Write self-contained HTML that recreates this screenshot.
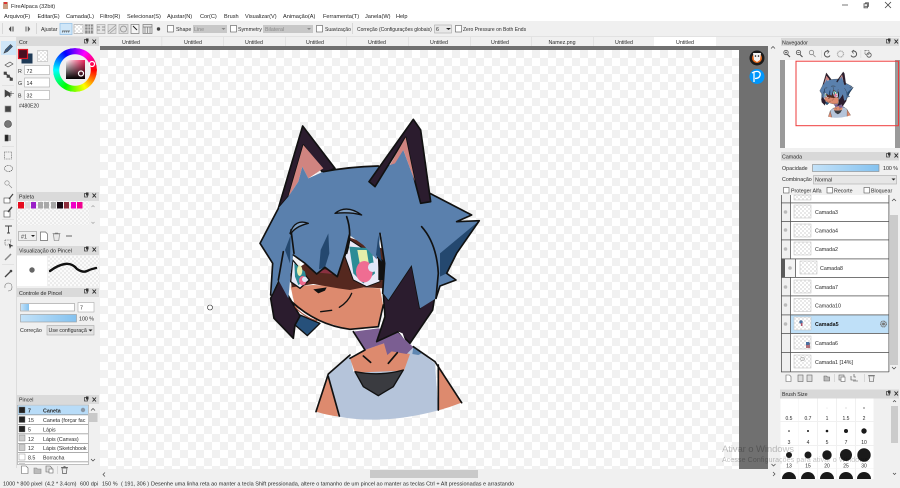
<!DOCTYPE html>
<html><head><meta charset="utf-8"><style>
html,body{margin:0;padding:0;background:#f0f0f0;width:900px;height:488px;overflow:hidden}
#w{position:absolute;left:0;top:0;width:900px;height:488px;filter:blur(.25px)}
svg{position:absolute;left:0;top:0;font-family:"Liberation Sans",sans-serif;font-size:5.3px;fill:#2a2a2a}
.wheel{position:absolute;left:53px;top:48px;width:44px;height:44px;border-radius:50%;background:conic-gradient(#8000ff,#ff00ff 30deg,#f00 90deg,#ff0 150deg,#0f0 210deg,#0ff 270deg,#00f 330deg,#8000ff 360deg);-webkit-mask:radial-gradient(circle,transparent 15.5px,#000 16px);mask:radial-gradient(circle,transparent 15.5px,#000 16px)}
</style></head><body><div id="w">
<svg width="900" height="488" viewBox="0 0 900 488" xmlns="http://www.w3.org/2000/svg">
<defs>
<pattern id="ck" x="100" y="50" width="16" height="16" patternUnits="userSpaceOnUse"><rect width="16" height="16" fill="#fff"/><rect width="8" height="8" fill="#f1f1f1"/><rect x="8" y="8" width="8" height="8" fill="#f1f1f1"/></pattern>
<pattern id="sm" width="4" height="4" patternUnits="userSpaceOnUse"><rect width="4" height="4" fill="#fff"/><rect width="2" height="2" fill="#e8e8e8"/><rect x="2" y="2" width="2" height="2" fill="#e8e8e8"/></pattern>
<linearGradient id="bl" x1="0" y1="0" x2="1" y2="0"><stop offset="0" stop-color="#c4e2f8"/><stop offset="1" stop-color="#84c2f0"/></linearGradient>
<linearGradient id="h1" x1="0" y1="0" x2="1" y2="0"><stop offset="0" stop-color="#fff"/><stop offset="1" stop-color="#f0245c"/></linearGradient>
<linearGradient id="v1" x1="0" y1="0" x2="0" y2="1"><stop offset="0" stop-color="#000" stop-opacity="0"/><stop offset="1" stop-color="#000"/></linearGradient>
<clipPath id="bs"><rect x="780" y="398" width="110" height="81"/></clipPath>
</defs>

<!-- window chrome -->
<rect width="900" height="21" fill="#fff"/>
<rect x="0" y="21" width="900" height="15" fill="#f0f0f0"/>
<rect x="0" y="36" width="900" height="1" fill="#e2e2e2"/>
<rect x="3" y="2" width="5" height="7" fill="#c9a184"/><rect x="4" y="2" width="3" height="2" fill="#d33"/>
<text x="11" y="8" font-size="5.600">FireAlpaca (32bit)</text>
<g fill="#222" font-size="5.600">
<text x="4" y="18">Arquivo(F)</text><text x="37.500" y="18">Editar(E)</text><text x="66" y="18">Camada(L)</text><text x="100" y="18">Filtro(R)</text><text x="127" y="18">Selecionar(S)</text><text x="167" y="18">Ajustar(N)</text><text x="200" y="18">Cor(C)</text><text x="224" y="18">Brush</text><text x="245" y="18">Visualizar(V)</text><text x="283" y="18">Animação(A)</text><text x="323" y="18">Ferramenta(T)</text><text x="365" y="18">Janela(W)</text><text x="396" y="18">Help</text>
</g>
<rect x="842" y="4.500" width="6" height="1" fill="#777"/>
<path d="M864.500 6h4v-3.500h-3v1M864 3.500h3.500v4h-3.500z" fill="none" stroke="#555" stroke-width=".8" transform="translate(0,.3)"/>
<path d="M885 2l6 6M891 2l-6 6" stroke="#444" stroke-width=".8"/>

<!-- toolbar -->
<rect x="2" y="23" width="1" height="11" fill="#d8d8d8"/><rect x="36" y="23" width="1" height="11" fill="#d8d8d8"/>
<path d="M11 26.500l-2 2.500 2 2.500zM12.500 26.500v5M13.500 26.500v5" fill="#444" stroke="#444" stroke-width=".5"/>
<path d="M28 26.500l2 2.500-2 2.500zM26.500 26.500v5M25.500 26.500v5" fill="#666" stroke="#666" stroke-width=".5"/>
<text x="41" y="31">Ajustar</text>
<rect x="60" y="23.500" width="12" height="11" fill="#cfe6f8" stroke="#8cbde6" stroke-width=".7"/>
<path d="M62 31h8M62 32h1M64 32h1M66 32h1M68 32h1" stroke="#555" stroke-width=".7"/>
<g fill="none" stroke="#aaa" stroke-width=".7">
<rect x="74" y="24.500" width="9" height="9" fill="url(#sm)"/><rect x="85" y="24.500" width="8" height="9" fill="#888"/><path d="M85 27h8M85 30h8M88 24.500v9M90.500 24.500v9" stroke="#eee"/>
<rect x="97" y="24.500" width="8" height="9" fill="#e4e4e4"/><path d="M97 27h3M102 27h3M97 30h3M102 30h3" stroke="#777"/>
<rect x="108" y="24.500" width="8" height="9" fill="#e0e0e0"/><path d="M108 32l8-7M110 33l6-5" stroke="#999"/>
<rect x="119" y="24.500" width="9" height="9" fill="#e0e0e0"/><circle cx="123.500" cy="29" r="3" stroke="#888"/>
<rect x="131" y="24.500" width="8" height="9" fill="#f4f4f4" stroke="#777"/><path d="M133 26l4 4" stroke="#222" stroke-width="1"/>
<rect x="143" y="24.500" width="9" height="9" fill="#e8e8e8" stroke="#777"/><path d="M143 27h9M145 27v6M147.500 27v6M150 27v6" stroke="#777"/>
</g>
<circle cx="158.500" cy="29" r="1.700" fill="#444"/>
<rect x="167.500" y="25.500" width="6" height="6.500" fill="#fff" stroke="#555" stroke-width=".6"/><text x="176" y="31">Shape</text>
<rect x="193" y="25" width="34" height="8" fill="#c8c8c8"/><text x="194" y="31" fill="#888">Line</text><path d="M221.500 28l2 2 2-2z" fill="#888"/>
<rect x="230.500" y="25.500" width="6" height="6.500" fill="#fff" stroke="#555" stroke-width=".6"/><text x="238" y="31">Symmetry</text>
<rect x="263" y="25" width="50" height="8" fill="#c8c8c8"/><text x="265" y="31" fill="#888">Bilateral</text><path d="M307 28l2 2 2-2z" fill="#888"/>
<rect x="316.500" y="25.500" width="6" height="6.500" fill="#fff" stroke="#555" stroke-width=".6"/><text x="325" y="31" font-size="5">Suavização</text>
<rect x="352" y="23" width="1" height="11" fill="#d8d8d8"/>
<text x="357" y="31" font-size="5">Correção (Configurações globais)</text>
<rect x="434.500" y="25" width="17" height="8" fill="#e8e8e8" stroke="#aaa" stroke-width=".6"/><text x="436" y="31">6</text><path d="M446 28l2.500 2 2.500-2z" fill="#222"/>
<rect x="455.500" y="25.500" width="6" height="6.500" fill="#fff" stroke="#555" stroke-width=".6"/><text x="463" y="31" font-size="5">Zero Pressure on Both Ends</text>

<!-- tabs -->
<rect x="100" y="37" width="668" height="9" fill="#f0f0f0"/>
<rect x="654" y="37" width="62" height="9" fill="#fff"/>
<g text-anchor="middle">
<text x="131" y="44">Untitled</text><text x="193" y="44">Untitled</text><text x="254" y="44">Untitled</text><text x="315" y="44">Untitled</text><text x="377" y="44">Untitled</text><text x="439" y="44">Untitled</text><text x="500" y="44">Untitled</text><text x="562" y="44">Namez.png</text><text x="624" y="44">Untitled</text><text x="685" y="44">Untitled</text>
</g>
<g fill="#dcdcdc"><rect x="161.500" y="37" width=".7" height="9"/><rect x="223" y="37" width=".7" height="9"/><rect x="285" y="37" width=".7" height="9"/><rect x="346" y="37" width=".7" height="9"/><rect x="408" y="37" width=".7" height="9"/><rect x="470" y="37" width=".7" height="9"/><rect x="531" y="37" width=".7" height="9"/><rect x="593" y="37" width=".7" height="9"/></g>

<!-- canvas -->
<rect x="100" y="46" width="668" height="423" fill="#707070"/>
<rect x="100" y="50" width="639" height="419" fill="url(#ck)"/>
<rect x="100" y="469" width="680" height="11" fill="#f0f0f0"/>
<rect x="370" y="470" width="108" height="8" fill="#c9c9c9"/>
<path d="M771 48.500l2-2 2 2" fill="none" stroke="#444" stroke-width=".7"/>
<path d="M771.500 464l2 2 2-2M773 472l2 2-2 2" fill="none" stroke="#444" stroke-width=".7"/>
<path d="M105 472.500l-2 2 2 2" fill="none" stroke="#444" stroke-width=".7"/>

<!-- avatars -->
<circle cx="757" cy="58" r="7.500" fill="#1a1a1a"/><circle cx="757" cy="58" r="5" fill="#e8681a"/><path d="M753 53h8l-1 7-3 2-3-2z" fill="#f4f4f4"/><circle cx="755.500" cy="56" r=".8" fill="#111"/><circle cx="758.500" cy="56" r=".8" fill="#111"/>
<circle cx="757" cy="76.500" r="7.500" fill="#0096fa"/><path d="M754 82v-9.500M752 73q3-2 6-1.500 3 1 2 4-1 3-5 3" fill="none" stroke="#fff" stroke-width="1.300"/>

<!-- character -->
<g id="ch" transform="translate(250,230) scale(.3333)" stroke-linejoin="round" stroke-linecap="round">
<!-- body -->
<path d="M235,440 L198,545 Q232,556 268,560 L262,500 Z" fill="#dd8a6e"/>
<path d="M565,405 L635,518 Q600,532 565,541 Z" fill="#dd8a6e"/>
<path d="M300,375 L235,432 L265,560 Q400,585 565,541 L555,400 L490,350 L440,375 L460,420 L310,425 Z" fill="#b5c4da"/>
<path d="M490,352 L520,368 L505,375 L487,372 Z" fill="#5f87b2"/>
<path d="M300,385 L345,360 L400,340 L440,365 L480,372 L462,422 L315,428 Z" fill="#dd8a6e"/>
<path d="M310,305 L385,295 L445,305 L490,352 L470,372 L425,364 L412,375 L402,340 L345,360 Z" fill="#7b5e92"/>
<path d="M315,425 Q390,440 460,420 L430,470 L385,497 L340,470 Z" fill="#3a3b40" stroke="#111" stroke-width="4"/>
<g fill="none" stroke="#111" stroke-width="5">
<path d="M198,545 L235,432 L300,375"/><path d="M235,440 L268,558"/><path d="M555,395 L635,518"/><path d="M565,405 L565,540"/><path d="M490,350 L555,395"/>
<path d="M310,305 L345,360 L300,385"/><path d="M340,378 L362,397"/><path d="M442,368 L415,400"/>
</g>
<!-- back hair -->
<path d="M400,190 L415,210 L485,105 L510,235 L558,175 L548,240 L480,340 L445,305 L380,335 L405,260 Z" fill="#2b1c2e" stroke="#111" stroke-width="5"/>
<path d="M445,305 L465,330 L458,310 Z" fill="#fff"/>
<path d="M150,255 L210,280 L172,317 L135,285 Z" fill="#26507a" stroke="#111" stroke-width="4"/>
<path d="M62,205 L88,150 L125,215 L150,258 L135,285 L130,325 L72,265 Z" fill="#2b1c2e" stroke="#111" stroke-width="5"/>
<!-- face -->
<path d="M122,170 L190,165 L390,175 L400,230 L385,290 L300,298 L200,270 L135,230 Z" fill="#dd8a6e"/>
<path d="M120,130 L290,20 L410,60 L405,175 L340,172 L300,180 L265,175 L190,162 L125,172 Z" fill="#55281f"/>
<path d="M205,128 Q225,108 250,132 Z" fill="#8a3040"/>
<path d="M128,90 L178,150 L150,175 L122,155 Z" fill="#e8e8f6" stroke="#111" stroke-width="4"/>
<path d="M133,100 L165,125 L170,150 L145,165 L135,140 Z" fill="#2d8c96"/>
<ellipse cx="149" cy="122" rx="8" ry="16" fill="#e8eeb0"/>
<ellipse cx="158" cy="152" rx="11" ry="14" fill="#ee6a8e"/>
<circle cx="164" cy="148" r="8" fill="#dfe6f6"/>
<path d="M285,80 L300,30 L385,85 L390,155 L350,170 L310,150 Z" fill="#e9e9f7" stroke="#111" stroke-width="3"/>
<path d="M298,50 L365,55 L375,130 L340,160 L310,130 Z" fill="#2d8c96"/>
<path d="M322,60 L350,60 L358,110 L330,105 Z" fill="#e4eeaa"/>
<ellipse cx="343" cy="125" rx="25" ry="32" fill="#ef6d92"/>
<circle cx="368" cy="112" r="14" fill="#dfe8fa"/>
<path d="M385,80 L405,95 L405,150 L385,150 Z" fill="#111"/>
<path d="M190,178 L230,172 L225,182 L205,190 Z" fill="#111"/>
<path d="M212,245 L245,241 M268,232 Q295,215 305,190" fill="none" stroke="#111" stroke-width="4"/>
<path d="M125,215 Q200,285 300,298 L385,290 L400,225" fill="none" stroke="#111" stroke-width="5"/>
<path d="M135,230 Q160,260 200,272" fill="none" stroke="#a9503a" stroke-width="3"/>
<!-- left ear -->
<path d="M85,-65 L158,-312 L255,-185 L220,-170 L160,-255 L115,-100 Z" fill="#2b1c2e" stroke="#111" stroke-width="5"/>
<path d="M115,-100 L160,-255 L220,-185 L175,-155 L157,-190 L145,-145 Z" fill="#d08480"/>
<!-- hair -->
<path d="M85,-65 L115,-100 L145,-145 L157,-190 L175,-155 L220,-175 Q300,-190 380,-192 L420,-195 L460,-240 L495,-145 L510,-80 L540,-110 L665,-45 L620,-25 L688,-28 L620,70 L590,130 L618,150 L570,168 L558,205 L510,235 L485,105 L415,210 L400,190 L403,100 L393,10 L380,88 L340,45 L298,15 L285,70 L262,140 L225,112 L200,132 L165,100 L130,75 L122,130 L115,205 L85,150 L65,195 L68,100 L30,40 Z" fill="#5a80ad"/>
<path d="M688,-28 L570,70 L570,140 L590,130 L620,70 Z" fill="#24486f"/>
<path d="M235,10 L212,60 L207,118 L225,112 L238,70 Z" fill="#24486f"/>
<path d="M385,15 L378,75 L395,95 Z" fill="#24486f"/>
<path d="M122,15 L105,60 L120,100 Z" fill="#24486f"/>
<g fill="none" stroke="#111" stroke-width="5">
<path d="M220,-175 Q300,-190 385,-192"/>
<path d="M85,-65 L30,40 L68,100 L62,195"/>
<path d="M540,-110 L665,-45 L620,-25 L688,-28 L620,70 L590,130 L618,150 L570,168 L558,205"/>
<path d="M298,15 L285,70 L262,140 L225,112 L200,132 L165,100 L130,75"/>
<path d="M123,0 L132,70 M100,65 L85,150"/>
<path d="M515,-10 Q560,40 565,130 L558,205"/>
<path d="M290,-40 Q308,10 290,70"/>
<path d="M390,10 L404,100 L398,190"/>
</g>
<path d="M255,-50 Q290,-78 335,-45 Q300,-55 255,-50 Z" fill="#7e9fc4" stroke="#111" stroke-width="4"/>
<path d="M120,10 Q135,-35 175,-20 Q135,-10 122,12 Z" fill="#7e9fc4" stroke="#111" stroke-width="4"/>
<!-- right ear, over the hair -->
<path d="M357,-145 L490,-332 L512,-300 L542,-85 L512,-80 L495,-145 L467,-278 L375,-130 Z" fill="#2b1c2e" stroke="#111" stroke-width="5"/>
<path d="M420,-195 L467,-278 L495,-145 L460,-240 L435,-200 Z" fill="#d08480"/>
</g>
<circle cx="210" cy="307.500" r="2.500" fill="#fff" fill-opacity=".4" stroke="#222" stroke-width=".6"/>

<!-- left tools -->
<rect x="0" y="37" width="16" height="432" fill="#f0f0f0"/>
<rect x="16" y="37" width="1" height="431" fill="#dcdcdc"/>
<rect x="1" y="41" width="15" height="14" fill="#cfe6f8"/>
<g fill="#444" stroke="#444" stroke-width=".6">
<path d="M4 53l1.500-3.500 5-5 2 2-5 5z" fill="#3c5d80"/>
<path d="M5 65l5-3 3 2-5 3z" fill="#eee"/>
<path d="M5 73l7 6" stroke-width="1.200"/><rect x="4" y="72" width="2.500" height="2.500"/><rect x="7" y="75" width="2.500" height="2.500"/><rect x="10" y="78" width="2.500" height="2.500"/>
<path d="M5 90v7l3-2 2 2v-4z"/><path d="M11 91v5M9 93.500h5"/>
<rect x="5" y="106" width="6" height="6" stroke="#999"/>
<circle cx="8" cy="124" r="3.500" fill="#777"/>
<path d="M5 135h6v6h-6z" fill="#aaa" stroke="none"/><rect x="5" y="135" width="3" height="6" fill="#222"/>
<rect x="4.500" y="152" width="7" height="7" fill="none" stroke-dasharray="1 .7"/>
<ellipse cx="8.500" cy="168.500" rx="4" ry="3" fill="none" stroke-dasharray="1.200 .6"/>
<circle cx="7" cy="183" r="2.200" fill="none" stroke="#888"/><path d="M9 185l3 3" stroke="#888"/>
<rect x="4" y="198" width="6" height="5" fill="#fff"/><path d="M9 199l4-5" stroke-width="1.200"/>
<rect x="4" y="211" width="6" height="6" fill="#fff"/><path d="M8 212l4-5" stroke-width="1.500"/>
<path d="M5 226h7M8.500 226v7M7 233h3" stroke-width=".9"/>
<path d="M5 240h6l-1 5M5 240v5h3" fill="none" stroke-dasharray="1 .7"/><path d="M9 244l1 4 1-2 2 0z"/>
<path d="M5 260l6-6" stroke-width="1.500" stroke="#888"/>
<path d="M5 277l6-6" stroke-width="1.300"/><circle cx="11" cy="271" r="1"/>
<path d="M5 288q-1-4 3-5 4 0 4 4 0 4-4 4" fill="none" stroke="#777"/>
</g>
<g fill="#dcdcdc"><rect x="2" y="85" width="12" height=".7"/><rect x="2" y="146" width="12" height=".7"/><rect x="2" y="219" width="12" height=".7"/><rect x="2" y="264" width="12" height=".7"/></g>

<!-- panel Cor -->
<rect x="17" y="37" width="82" height="9" fill="#dadada"/>
<text x="19" y="44">Cor</text>
<g id="pb"><rect x="84.500" y="39.500" width="3" height="3.500" fill="none" stroke="#333" stroke-width=".7"/><rect x="86" y="38.500" width="2.500" height="3" fill="#333"/><path d="M92.500 39.500l3.500 4M96 39.500l-3.500 4" stroke="#222" stroke-width=".9"/></g>
<rect x="21.500" y="53.500" width="11" height="10" fill="#1e3a56"/>
<rect x="18.500" y="49.500" width="9" height="9" fill="#480E20" stroke="#e01828" stroke-width="1.200"/>
<rect x="37.500" y="50.500" width="10" height="11" fill="url(#sm)" stroke="#bbb" stroke-width=".6"/>
<rect x="24.500" y="65.500" width="25" height="9" fill="#fff" stroke="#aaa" stroke-width=".6"/>
<rect x="24.500" y="78" width="25" height="9" fill="#fff" stroke="#aaa" stroke-width=".6"/>
<rect x="24.500" y="90.500" width="25" height="9" fill="#fff" stroke="#aaa" stroke-width=".6"/>
<text x="18" y="73">R</text><text x="26.500" y="73">72</text><text x="18" y="85">G</text><text x="26.500" y="85">14</text><text x="18" y="97.500">B</text><text x="26.500" y="97.500">32</text>
<text x="19" y="107.500" font-size="5">#480E20</text>

<!-- panel Paleta -->
<rect x="17" y="192" width="82" height="9" fill="#dadada"/><text x="19" y="198.500">Paleta</text>
<use href="#pb" y="154"/>
<rect x="17" y="201" width="72" height="24" fill="url(#sm)" opacity=".6"/>
<g><rect x="18" y="202" width="6" height="6.500" fill="#e60c1e"/><rect x="25" y="202" width="5" height="6.500" fill="#dcdcdc"/><rect x="31" y="202" width="5" height="6.500" fill="#9a20c8"/><rect x="38" y="202" width="5" height="6.500" fill="#a8a8a8"/><rect x="44" y="202" width="5" height="6.500" fill="#a8a8a8"/><rect x="51" y="202" width="5" height="6.500" fill="#a8a8a8"/><rect x="57" y="202" width="6" height="6.500" fill="#180a14"/><rect x="64" y="202" width="5" height="6.500" fill="#8c2a3a"/><rect x="71" y="202" width="5" height="6.500" fill="#f000c8"/><rect x="77" y="202" width="5.500" height="6.500" fill="#f00090"/></g>
<path d="M91.500 207l1.500-1.500 1.500 1.500M91.500 222l1.500 1.500 1.500-1.500" fill="none" stroke="#999" stroke-width=".6"/>
<rect x="18.500" y="231.500" width="18" height="9" fill="#eee" stroke="#999" stroke-width=".6"/><text x="21" y="238.500">#1</text><path d="M31 235l2 2 2-2z" fill="#222"/>
<path d="M40.500 232h5l2 2v6.500h-7z" fill="#fff" stroke="#666" stroke-width=".7"/>
<path d="M53.500 234h6l-.7 6.500h-4.600zM52.500 233.500h8M55 233h3" fill="#e8e8e8" stroke="#777" stroke-width=".6"/>
<rect x="66" y="235.500" width="6" height="1" fill="#666"/>

<!-- brush preview -->
<rect x="17" y="246" width="82" height="9" fill="#dadada"/><text x="19" y="252.500">Visualização do Pincel</text>
<use href="#pb" y="208"/>
<rect x="48" y="256" width="51" height="30" fill="url(#sm)" opacity=".7"/>
<rect x="17" y="256" width="30" height="30" fill="#fff"/>
<circle cx="32" cy="270" r="2.700" fill="#666"/>
<path d="M50 271q8-6 15-7t12 5q6 4 10 2t9-3" fill="none" stroke="#111" stroke-width="2.400" stroke-linecap="round"/>

<!-- brush control -->
<rect x="17" y="288" width="82" height="9" fill="#dadada"/><text x="19" y="295">Controle de Pincel</text>
<use href="#pb" y="250"/>
<rect x="20.500" y="303.500" width="54" height="7.500" fill="#fff" stroke="#999" stroke-width=".6"/><rect x="21" y="304" width="8" height="6.500" fill="url(#bl)"/>
<rect x="78" y="302.500" width="16" height="9.500" fill="#fff" stroke="#aaa" stroke-width=".6"/><text x="80" y="309.500">7</text>
<rect x="20.500" y="314.500" width="56" height="7.500" fill="url(#bl)" stroke="#999" stroke-width=".6"/><text x="79" y="320.500">100 %</text>
<text x="20" y="332">Correção</text>
<rect x="47" y="325.500" width="47" height="9.500" fill="#e2e2e2" stroke="#aaa" stroke-width=".6"/><text x="48.500" y="332">Use configuraçã</text><path d="M88.500 329.500l2 2 2-2z" fill="#222"/>

<!-- Pincel panel -->
<rect x="17" y="395" width="82" height="9" fill="#dadada"/><text x="19" y="401.500">Pincel</text>
<use href="#pb" y="358"/>
<rect x="17.500" y="405" width="71" height="59.500" fill="#fff" stroke="#999" stroke-width=".6"/>
<rect x="18" y="405.500" width="70" height="9" fill="#b8dcf8"/>
<g fill="#888"><rect x="18" y="414.500" width="70" height=".7"/><rect x="18" y="424" width="70" height=".7"/><rect x="18" y="433.500" width="70" height=".7"/><rect x="18" y="443" width="70" height=".7"/><rect x="18" y="452" width="70" height=".7"/><rect x="18" y="461.500" width="70" height=".7"/></g>
<g stroke="#777" stroke-width=".4"><rect x="19" y="407" width="6" height="6" fill="#222"/><rect x="19" y="416.500" width="6" height="6" fill="#222"/><rect x="19" y="426" width="6" height="6" fill="#222"/><rect x="19" y="435" width="6" height="6" fill="#ccc"/><rect x="19" y="444.500" width="6" height="6" fill="#ccc"/><rect x="19" y="454" width="6" height="6" fill="#fff"/></g>
<text x="28" y="412.500" font-weight="bold">7</text><text x="43" y="412.500" font-weight="bold">Caneta</text>
<text x="28" y="422">15</text><text x="43" y="422">Caneta (forçar fac</text>
<text x="28" y="431.500">5</text><text x="43" y="431.500">Lápis</text>
<text x="28" y="441">12</text><text x="43" y="441">Lápis (Canvas)</text>
<text x="28" y="450">12</text><text x="43" y="450">Lápis (Sketchbook</text>
<text x="28" y="459.500">8.5</text><text x="43" y="459.500">Borracha</text>
<rect x="19" y="463" width="6" height="1.500" fill="#ccc"/>
<circle cx="83" cy="410" r="2.200" fill="#8a97a5"/>
<rect x="88.500" y="413" width="9" height="9" fill="#c9c9c9"/>
<path d="M91 410.500l2-2 2 2M91 459l2 2 2-2" fill="none" stroke="#444" stroke-width=".7"/>
<path d="M21.500 466h4.500l2 2v5.500h-6.500z" fill="#fff" stroke="#666" stroke-width=".6"/>
<path d="M34 468h2.500l1 1h3.500v4.500h-7z" fill="#bbb" stroke="#888" stroke-width=".6"/>
<path d="M46 466h4l2 2v4h-6z" fill="#ddd" stroke="#666" stroke-width=".6"/><rect x="49" y="469" width="4" height="4" fill="#fff" stroke="#666" stroke-width=".6"/>
<rect x="57" y="466" width=".7" height="8" fill="#ccc"/>
<path d="M62 468h5l-.6 5.500h-3.800zM61 467.500h7M63.500 466.500h2" fill="#eee" stroke="#555" stroke-width=".7"/>

<!-- status -->
<rect x="0" y="480" width="900" height="8" fill="#f0f0f0"/>
<g font-size="5.500"><text x="3" y="485.500">1000 * 800 pixel</text><text x="45" y="485.500">(4.2 * 3.4cm)</text><text x="80" y="485.500">600 dpi</text><text x="102" y="485.500">150 %</text><text x="121" y="485.500">( 191, 306 )</text><text x="151" y="485.500" textLength="363" lengthAdjust="spacing">Desenhe uma linha reta ao manter a tecla Shift pressionada, altere o tamanho de um pincel ao manter as teclas Ctrl + Alt pressionadas e arrastando</text></g>

<!-- right panels -->
<rect x="780" y="37" width="120" height="443" fill="#f0f0f0"/>
<rect x="781" y="38" width="118" height="8" fill="#d8d8d8"/><text x="782" y="44.500">Navegador</text>
<use href="#pb" x="802" y="0"/>
<g fill="none" stroke="#555" stroke-width=".8">
<circle cx="786" cy="52.500" r="2.200"/><path d="M787.500 54.500l2.500 2.500" stroke-width="1.200"/><path d="M785 52.500h2M786 51.500v2"/>
<circle cx="798.500" cy="52.500" r="2.200"/><path d="M800 54.500l2.500 2.500" stroke-width="1.200"/><path d="M797.500 52.500h2"/>
<circle cx="811.500" cy="52.500" r="2.200" stroke="#888"/><path d="M813 54.500l2.500 2.500" stroke="#888"/>
<path d="M829 51.500a3 3 0 1 0 1 4" stroke-width="1"/><path d="M827 50l2 1.500-1.500 2" stroke-width=".7"/>
<circle cx="840.500" cy="54" r="3" stroke="#aaa" stroke-width="1.300" stroke-dasharray="1 .5"/>
<path d="M852 51.500a3 3 0 1 1-1 4" stroke-width="1"/><path d="M854 50l-2 1.500 1.500 2" stroke-width=".7"/>
<rect x="865" y="50.500" width="4" height="4" stroke-dasharray=".8 .6"/><circle cx="869" cy="55" r="2.200"/>
</g>
<rect x="821" y="50" width=".7" height="8" fill="#ddd"/><rect x="860.500" y="50" width=".7" height="8" fill="#ddd"/>
<rect x="780" y="60" width="120" height="88" fill="#fff"/>
<rect x="780" y="60" width="5" height="88" fill="#9a9a9a"/><rect x="895" y="60" width="5" height="88" fill="#9a9a9a"/>
<use href="#ch" transform="translate(780,53.600) scale(.153)"/>
<rect x="796" y="61.200" width="102.500" height="64.500" fill="none" stroke="#ee3b3b" stroke-width="1"/>

<rect x="781" y="152" width="118" height="8.500" fill="#d8d8d8"/><text x="782" y="158.500">Camada</text>
<use href="#pb" x="802" y="114"/>
<text x="782" y="170">Opacidade</text>
<rect x="812.500" y="164.500" width="66.500" height="7" fill="url(#bl)" stroke="#888" stroke-width=".6"/>
<text x="883" y="170">100 %</text>
<text x="782" y="181">Combinação</text>
<rect x="813.500" y="175.500" width="83" height="8.500" fill="#e6e6e6" stroke="#aaa" stroke-width=".6"/><text x="815" y="181.500">Normal</text><path d="M891.500 178.500l2 2 2-2z" fill="#222"/>
<g fill="#fff" stroke="#555" stroke-width=".6"><rect x="783.500" y="187.500" width="5.500" height="5.500"/><rect x="827" y="187.500" width="5.500" height="5.500"/><rect x="864" y="187.500" width="5.500" height="5.500"/></g>
<text x="791" y="192.500">Proteger Alfa</text><text x="834" y="192.500">Recorte</text><text x="871" y="192.500">Bloquear</text>

<!-- layers -->
<rect x="781" y="195" width="108" height="178" fill="#f0f0f0"/>
<rect x="790" y="195" width="99" height="178" fill="#fff"/>
<rect x="790" y="314.500" width="99" height="19" fill="#bfe0f8"/>
<rect x="785" y="259" width="10" height="18" fill="#f4f4f4"/>
<g fill="#555"><rect x="781" y="202.500" width="108" height=".8"/><rect x="781" y="221" width="108" height=".8"/><rect x="781" y="239.500" width="108" height=".8"/><rect x="781" y="258.500" width="108" height=".8"/><rect x="781" y="277" width="108" height=".8"/><rect x="781" y="295.500" width="108" height=".8"/><rect x="781" y="314.500" width="108" height=".8"/><rect x="781" y="333" width="108" height=".8"/><rect x="781" y="352" width="108" height=".8"/><rect x="781" y="371.500" width="108" height=".8"/>
<rect x="781" y="195" width=".8" height="177"/><rect x="790" y="195" width=".8" height="64"/><rect x="790" y="277" width=".8" height="95"/><rect x="888.500" y="195" width=".8" height="177"/></g>
<rect x="781.500" y="259" width="3.500" height="18" fill="#5a5a5a"/>
<rect x="795" y="259" width=".8" height="18" fill="#555"/>
<g fill="url(#sm)" stroke="#bbb" stroke-width=".5">
<rect x="794" y="195" width="17" height="5"/><rect x="794" y="205" width="17" height="13"/><rect x="794" y="224" width="17" height="13"/><rect x="794" y="242" width="17" height="13"/><rect x="800" y="261" width="17" height="13"/><rect x="794" y="280" width="17" height="13"/><rect x="794" y="298.500" width="17" height="13"/><rect x="794" y="317" width="17" height="13"/><rect x="794" y="336" width="17" height="13"/><rect x="794" y="355" width="17" height="13"/>
</g>
<circle cx="801" cy="322" r="1.700" fill="#4a6fa0"/><rect x="801" y="323" width="1.500" height="3" fill="#b0506a"/>
<rect x="806" y="343" width="4" height="5" fill="#b0707a"/><rect x="806" y="342" width="3.500" height="3" fill="#4a6fa0"/>
<ellipse cx="802.500" cy="359" rx="2" ry="1.500" fill="none" stroke="#888" stroke-width=".5"/>
<g fill="#bbb"><circle cx="785.500" cy="212" r="1.800"/><circle cx="785.500" cy="230" r="1.800"/><circle cx="785.500" cy="249" r="1.800"/><circle cx="790" cy="268" r="1.800"/><circle cx="785.500" cy="287" r="1.800"/><circle cx="785.500" cy="305" r="1.800"/><circle cx="785.500" cy="324" r="1.800"/></g>
<text x="815" y="214">Camada3</text><text x="815" y="232.500">Camada4</text><text x="815" y="251">Camada2</text><text x="820" y="270">Camada8</text><text x="815" y="289">Camada7</text><text x="815" y="307.500">Camada10</text><text x="815" y="326" font-weight="bold" fill="#111">Camada5</text><text x="815" y="345">Camada6</text><text x="815" y="364">Camada1 [14%]</text>
<circle cx="883.500" cy="324" r="2.800" fill="none" stroke="#777" stroke-width="1.400" stroke-dasharray="1 .5"/><circle cx="883.500" cy="324" r="1.500" fill="#777"/>
<rect x="890" y="215" width="8" height="150" fill="#cbcbcb"/>
<path d="M892 201l2-2 2 2M892 367l2 2 2-2" fill="none" stroke="#444" stroke-width=".7"/>
<!-- layer icons -->
<g stroke="#666" stroke-width=".6">
<path d="M786 375h3.500l1.500 1.500v5h-5z" fill="#fff"/><rect x="798" y="375" width="5" height="6.500" fill="#ddd"/><rect x="807" y="375" width="5" height="6.500" fill="#ddd"/><path d="M824 376h2.500l1 1h2v4h-5.500z" fill="#bbb"/><rect x="839" y="375" width="5" height="5" fill="#ddd"/><rect x="841" y="377" width="4" height="4.500" fill="#fff"/><path d="M851 376v4h5M854 374v3l2 0M853 381h5" fill="none" stroke="#444"/><path d="M869 376h5l-.5 5.500h-4zM868 375.500h7" fill="#eee" stroke="#555"/>
</g>
<rect x="834" y="374" width=".7" height="8" fill="#ccc"/><rect x="864" y="374" width=".7" height="8" fill="#ccc"/>

<!-- Brush size -->
<rect x="780" y="389.500" width="119" height="9" fill="#d8d8d8"/><text x="782" y="396">Brush Size</text>
<use href="#pb" x="802" y="352"/>
<g fill="#fff">
<rect x="780.500" y="398.500" width="18" height="22.500"/><rect x="799" y="398.500" width="18" height="22.500"/><rect x="818" y="398.500" width="18" height="22.500"/><rect x="837" y="398.500" width="18" height="22.500"/><rect x="856" y="398.500" width="17.500" height="22.500"/>
<rect x="780.500" y="422" width="18" height="23"/><rect x="799" y="422" width="18" height="23"/><rect x="818" y="422" width="18" height="23"/><rect x="837" y="422" width="18" height="23"/><rect x="856" y="422" width="17.500" height="23"/>
<rect x="780.500" y="446" width="18" height="22.500"/><rect x="799" y="446" width="18" height="22.500"/><rect x="818" y="446" width="18" height="22.500"/><rect x="837" y="446" width="18" height="22.500"/><rect x="856" y="446" width="17.500" height="22.500"/>
<rect x="780.500" y="469" width="18" height="10"/><rect x="799" y="469" width="18" height="10"/><rect x="818" y="469" width="18" height="10"/><rect x="837" y="469" width="18" height="10"/><rect x="856" y="469" width="17.500" height="10"/>
</g>
<g text-anchor="middle" font-size="5"><text x="789" y="420">0.5</text><text x="808" y="420">0.7</text><text x="827" y="420">1</text><text x="846" y="420">1.5</text><text x="864" y="420">2</text>
<text x="789" y="444">3</text><text x="808" y="444">4</text><text x="827" y="444">5</text><text x="846" y="444">7</text><text x="864" y="444">10</text>
<text x="789" y="467.500">13</text><text x="808" y="467.500">15</text><text x="827" y="467.500">20</text><text x="846" y="467.500">25</text><text x="864" y="467.500">30</text></g>
<g fill="#1a1a1a" clip-path="url(#bs)">
<circle cx="827" cy="408" r=".3" fill="#777"/><circle cx="846" cy="408" r=".4" fill="#666"/><circle cx="864" cy="408" r=".6"/>
<circle cx="789" cy="431" r=".8"/><circle cx="808" cy="431" r="1"/><circle cx="827" cy="431" r="1.300"/><circle cx="846" cy="431" r="2"/><circle cx="864" cy="431" r="2.700"/>
<circle cx="789" cy="455" r="3"/><circle cx="808" cy="455" r="3.500"/><circle cx="827" cy="455" r="4.700"/><circle cx="846" cy="455" r="6"/><circle cx="864" cy="455" r="6.700"/>
<circle cx="789" cy="479" r="7"/><circle cx="808" cy="479" r="7"/><circle cx="827" cy="479" r="7"/><circle cx="846" cy="479" r="7"/><circle cx="864" cy="479" r="7"/>
</g>
<rect x="891" y="406" width="7" height="37" fill="#cbcbcb"/>
<path d="M893 402l1.500-1.500 1.500 1.500M893 473l1.500 1.500 1.500-1.500" fill="none" stroke="#444" stroke-width=".7"/>

<!-- watermark -->
<text x="722" y="452" font-size="9.500" fill="#000" fill-opacity=".25" textLength="72">Ativar o Windows</text>
<text x="722" y="462" font-size="7" fill="#000" fill-opacity=".25" textLength="148">Acesse Configurações para ativar o Windows.</text>
</svg>
<div class="wheel"></div>
<svg width="900" height="488" viewBox="0 0 900 488" xmlns="http://www.w3.org/2000/svg">
<rect x="66" y="60" width="19" height="19" fill="url(#h1)"/><rect x="66" y="60" width="19" height="19" fill="url(#v1)"/>
<circle cx="92" cy="64" r="2.500" fill="none" stroke="#fff" stroke-width="1.200"/><circle cx="81" cy="73.500" r="2.500" fill="none" stroke="#fff" stroke-width="1.200"/>
</svg>
</div></body></html>
